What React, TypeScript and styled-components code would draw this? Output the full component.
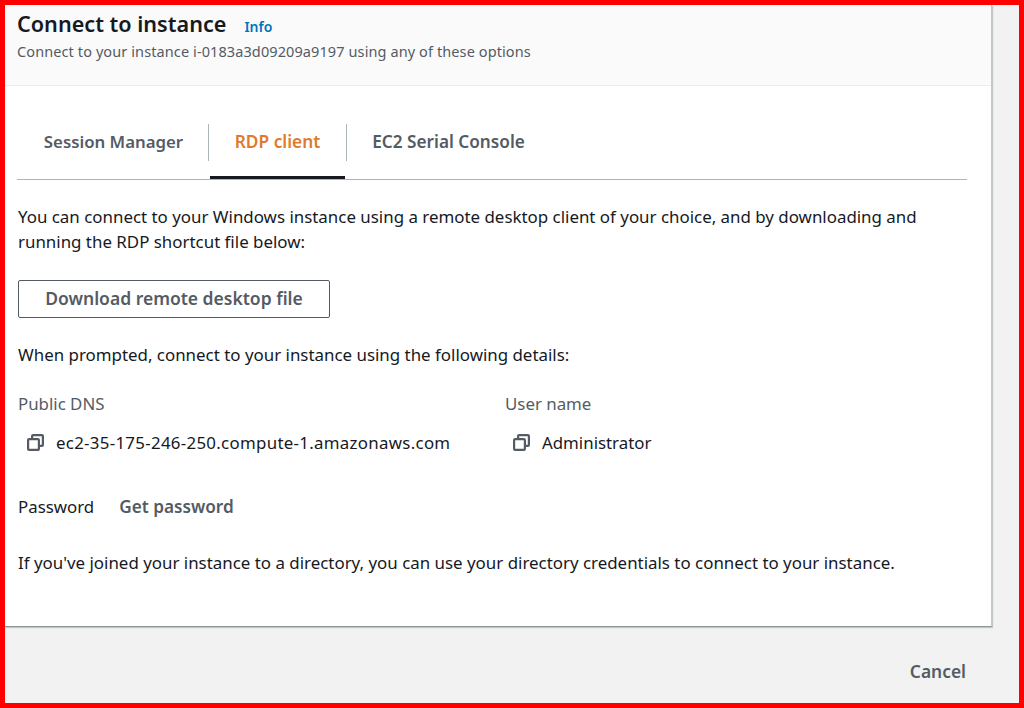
import React from 'react';
import styled, { createGlobalStyle } from 'styled-components';

const GlobalStyle = createGlobalStyle`
  html, body {
    margin: 0;
    padding: 0;
  }
  body {
    font-family: "Noto Sans", "Open Sans", sans-serif;
    color: #16191f;
  }
`;

const Frame = styled.div`
  width: 1024px;
  height: 708px;
  box-sizing: border-box;
  border: 5px solid #ff0000;
  background: #f2f2f3;
  overflow: hidden;
  display: flex;
  flex-direction: column;
`;

const Panel = styled.div`
  width: 987px;
  height: 622px;
  box-sizing: border-box;
  background: #ffffff;
  border-right: 1px solid #c4c8c8;
  border-bottom: 1px solid #8d9696;
  box-shadow: 1px 1px 1px rgba(0, 28, 36, 0.2);
  display: flex;
  flex-direction: column;
`;

const Header = styled.header`
  height: 81px;
  box-sizing: border-box;
  padding: 5px 0 0 12px;
  background: #fafafa;
  border-bottom: 1px solid #eaeded;
`;

const TitleRow = styled.div`
  display: flex;
  align-items: baseline;
  gap: 18px;
  height: 28px;
`;

const Title = styled.h1`
  margin: 0;
  font-size: 21.6px;
  line-height: 28px;
  font-weight: 600;
  color: #16191f;
`;

const InfoLink = styled.a`
  font-size: 14px;
  font-weight: 600;
  color: #0073bb;
`;

const Subtitle = styled.p`
  margin: 0;
  padding-top: 3px;
  font-size: 14.5px;
  line-height: 20px;
  letter-spacing: 0.1px;
  color: #545b64;
`;

const Body = styled.div`
  padding: 38px 24px 0 12px;
`;

const TabBar = styled.nav`
  display: flex;
  height: 56px;
  box-sizing: border-box;
  border-bottom: 1px solid #aab7b8;
`;

const Tab = styled.div<{ $active?: boolean; $width: number; $size: number; $dividerAt?: number }>`
  position: relative;
  width: ${(p) => p.$width}px;
  height: 55px;
  box-sizing: border-box;
  display: flex;
  align-items: flex-start;
  justify-content: center;
  padding-top: 5px;
  font-size: ${(p) => p.$size}px;
  line-height: 26px;
  font-weight: 600;
  color: ${(p) => (p.$active ? '#e07a2c' : '#545b64')};
  border-bottom: ${(p) => (p.$active ? '3px solid #16191f' : '0')};
  ${(p) =>
    p.$dividerAt !== undefined
      ? `&::before {
          content: '';
          position: absolute;
          left: ${p.$dividerAt}px;
          top: 0;
          height: 37px;
          width: 1px;
          background: #aab7b8;
        }`
      : ''}
`;

const Text = styled.p<{ $top: number }>`
  margin: ${(p) => p.$top}px 0 0 1px;
  font-size: 16.9px;
  line-height: 25px;
  color: #16191f;
`;

const DownloadButton = styled.button`
  display: block;
  width: 312px;
  height: 38px;
  margin: 26px 0 0 1px;
  padding: 0 0 3px;
  font-family: inherit;
  font-size: 17.5px;
  font-weight: 600;
  color: #545b64;
  background: #ffffff;
  border: 1px solid #545b64;
  border-radius: 2px;
`;

const DetailGrid = styled.div`
  display: grid;
  grid-template-columns: 487px 1fr;
  margin: 24px 0 0 1px;
`;

const Label = styled.div`
  font-size: 16.85px;
  line-height: 25px;
  color: #545b64;
`;

const CopyRow = styled.div<{ $inset: number; $spacing?: number }>`
  display: flex;
  align-items: center;
  gap: 12px;
  margin-top: 14px;
  padding-left: ${(p) => p.$inset}px;
  font-size: 16.85px;
  line-height: 25px;
  letter-spacing: ${(p) => p.$spacing ?? 0}px;
  color: #16191f;
`;

const PasswordRow = styled.div`
  display: flex;
  gap: 25px;
  margin: 39px 0 0 1px;
  font-size: 16.85px;
  line-height: 25px;
`;

const GetPassword = styled.span`
  font-size: 17.2px;
  font-weight: 600;
  color: #545b64;
`;

const Footer = styled.footer`
  display: flex;
  justify-content: flex-end;
  padding: 31px 53px 0 0;
`;

const CancelButton = styled.span`
  font-size: 17.4px;
  line-height: 26px;
  font-weight: 600;
  color: #545b64;
`;

const CopyIcon = () => (
  <svg width="17" height="17" viewBox="0 0 17 17" fill="none" stroke="#545b64" strokeWidth="2.2">
    <rect x="1.1" y="5.1" width="10.8" height="10.8" rx="1" />
    <path d="M5.1 5V2.1a1 1 0 0 1 1-1h8.8a1 1 0 0 1 1 1v8.8a1 1 0 0 1-1 1H12" />
  </svg>
);

const App: React.FC = () => (
  <>
    <GlobalStyle />
    <Frame>
      <Panel>
        <Header>
          <TitleRow>
            <Title>Connect to instance</Title>
            <InfoLink>Info</InfoLink>
          </TitleRow>
          <Subtitle>Connect to your instance i-0183a3d09209a9197 using any of these options</Subtitle>
        </Header>
        <Body>
          <TabBar>
            <Tab $width={193} $size={16.8}>Session Manager</Tab>
            <Tab $width={135} $size={17.3} $active $dividerAt={-2}>RDP client</Tab>
            <Tab $width={207} $size={17.2} $dividerAt={1}>EC2 Serial Console</Tab>
          </TabBar>
          <Text $top={24}>
            You can connect to your Windows instance using a remote desktop client of your choice, and by downloading and running the RDP shortcut file below:
          </Text>
          <DownloadButton>Download remote desktop file</DownloadButton>
          <Text $top={24}>When prompted, connect to your instance using the following details:</Text>
          <DetailGrid>
            <div>
              <Label>Public DNS</Label>
              <CopyRow $inset={9} $spacing={0.3}>
                <CopyIcon />
                ec2-35-175-246-250.compute-1.amazonaws.com
              </CopyRow>
            </div>
            <div>
              <Label>User name</Label>
              <CopyRow $inset={8}>
                <CopyIcon />
                Administrator
              </CopyRow>
            </div>
          </DetailGrid>
          <PasswordRow>
            Password
            <GetPassword>Get password</GetPassword>
          </PasswordRow>
          <Text $top={31}>
            If you've joined your instance to a directory, you can use your directory credentials to connect to your instance.
          </Text>
        </Body>
      </Panel>
      <Footer>
        <CancelButton>Cancel</CancelButton>
      </Footer>
    </Frame>
  </>
);

export default App;
